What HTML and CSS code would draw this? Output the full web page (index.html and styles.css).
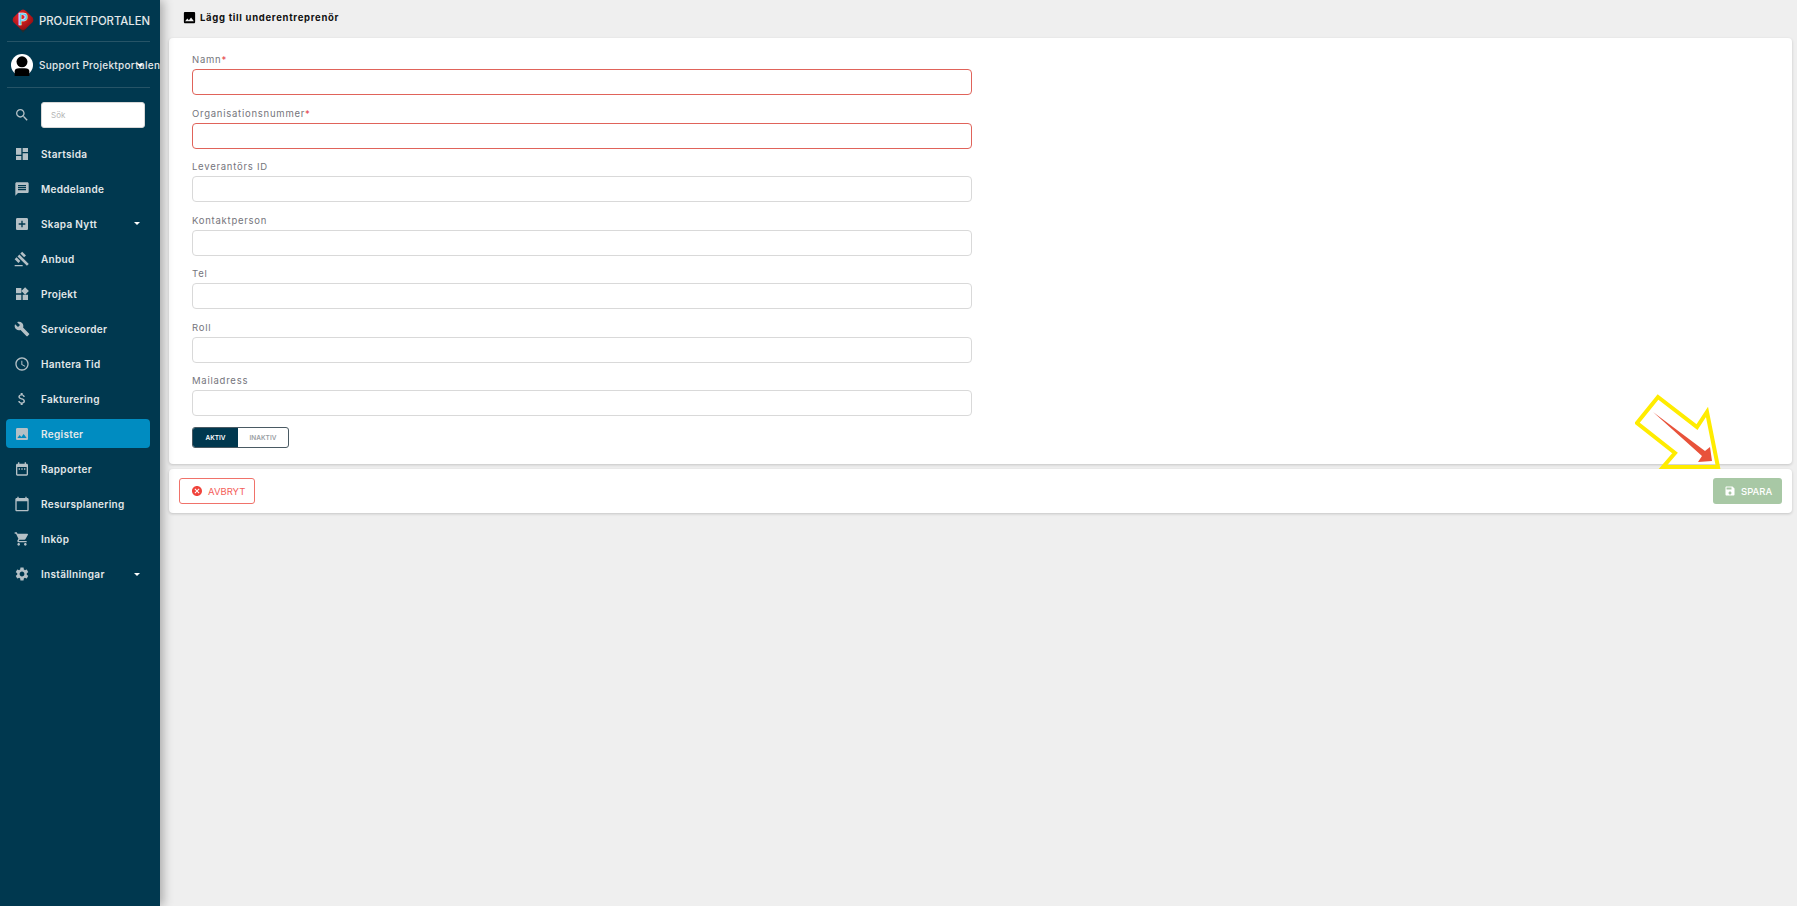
FILE: index.html
```html
<!DOCTYPE html>
<html lang="sv">

<head>
    <meta charset="UTF-8">
    <meta name="viewport" content="width=device-width, initial-scale=1.0">
    <title>Lägg till underentreprenör - Projektportalen</title>
    <link rel="stylesheet" href="styles.css">
</head>

<body>
    <svg class="sprite" aria-hidden="true">
        <symbol id="i-search" viewBox="0 0 24 24"><path d="M15.5 14h-.79l-.28-.27C15.41 12.59 16 11.11 16 9.5 16 5.91 13.09 3 9.5 3S3 5.91 3 9.5 5.91 16 9.5 16c1.61 0 3.09-.59 4.23-1.57l.27.28v.79l5 4.99L20.49 19l-4.99-5zm-6 0C7.01 14 5 11.99 5 9.5S7.01 5 9.5 5 14 7.01 14 9.5 11.99 14 9.5 14z"/></symbol>
        <symbol id="i-dashboard" viewBox="0 0 24 24"><path d="M3 13h8V3H3v10zm0 8h8v-6H3v6zm10 0h8V11h-8v10zm0-18v6h8V3h-8z"/></symbol>
        <symbol id="i-message" viewBox="0 0 24 24"><path d="M20 2H4c-1.1 0-1.99.9-1.99 2L2 22l4-4h14c1.1 0 2-.9 2-2V4c0-1.1-.9-2-2-2zm-2 12H6v-2h12v2zm0-3H6V9h12v2zm0-3H6V6h12v2z"/></symbol>
        <symbol id="i-add" viewBox="0 0 24 24"><path d="M19 3H5c-1.11 0-2 .9-2 2v14c0 1.1.89 2 2 2h14c1.1 0 2-.9 2-2V5c0-1.1-.9-2-2-2zm-2 10h-4v4h-2v-4H7v-2h4V7h2v4h4v2z"/></symbol>
        <symbol id="i-gavel" viewBox="0 0 24 24"><path d="M1 21h12v2H1zM5.245 8.07l2.83-2.827 14.14 14.142-2.828 2.828zM12.317 1l5.657 5.656-2.83 2.83-5.654-5.66zM3.825 9.485l5.657 5.657-2.828 2.828-5.657-5.657z"/></symbol>
        <symbol id="i-widgets" viewBox="0 0 24 24"><path d="M13 13v8h8v-8h-8zM3 21h8v-8H3v8zM3 3v8h8V3H3zm13.66-1.31L11 7.34 16.66 13l5.66-5.66-5.66-5.65z"/></symbol>
        <symbol id="i-build" viewBox="0 0 24 24"><path d="M22.7 19l-9.1-9.1c.9-2.3.4-5-1.5-6.9-2-2-5-2.4-7.4-1.3L9 6 6 9 1.6 4.7C.4 7.1.9 10.1 2.9 12.1c1.9 1.9 4.6 2.4 6.9 1.5l9.1 9.1c.4.4 1 .4 1.4 0l2.3-2.3c.5-.4.5-1.1.1-1.4z"/></symbol>
        <symbol id="i-clock" viewBox="0 0 24 24"><path d="M11.99 2C6.47 2 2 6.48 2 12s4.47 10 9.99 10C17.52 22 22 17.52 22 12S17.52 2 11.99 2zM12 20c-4.42 0-8-3.58-8-8s3.58-8 8-8 8 3.58 8 8-3.58 8-8 8zm.5-13H11v6l5.25 3.15.75-1.23-4.5-2.67z"/></symbol>
        <symbol id="i-money" viewBox="0 0 24 24"><path d="M11.8 10.9c-2.27-.59-3-1.2-3-2.15 0-1.09 1.01-1.85 2.7-1.85 1.78 0 2.44.85 2.5 2.1h2.21c-.07-1.72-1.12-3.3-3.21-3.81V3h-3v2.16c-1.94.42-3.5 1.68-3.5 3.61 0 2.31 1.91 3.46 4.7 4.13 2.5.6 3 1.48 3 2.41 0 .69-.49 1.79-2.7 1.79-2.06 0-2.87-.92-2.98-2.1h-2.2c.12 2.19 1.76 3.42 3.68 3.83V21h3v-2.15c1.95-.37 3.5-1.5 3.5-3.55 0-2.84-2.43-3.81-4.7-4.4z"/></symbol>
        <symbol id="i-image" viewBox="0 0 24 24"><path d="M21 19V5c0-1.1-.9-2-2-2H5c-1.1 0-2 .9-2 2v14c0 1.1.9 2 2 2h14c1.1 0 2-.9 2-2zM8.5 13.5l2.5 3.01L14.5 12l4.5 6H5l3.5-4.5z"/></symbol>
        <symbol id="i-event" viewBox="0 0 24 24"><path d="M9 11H7v2h2v-2zm4 0h-2v2h2v-2zm4 0h-2v2h2v-2zm2-7h-1V2h-2v2H8V2H6v2H5c-1.11 0-1.99.9-1.99 2L3 20c0 1.1.89 2 2 2h14c1.1 0 2-.9 2-2V6c0-1.1-.9-2-2-2zm0 16H5V9h14v11z"/></symbol>
        <symbol id="i-calendar" viewBox="0 0 24 24"><path d="M20 3h-1V1h-2v2H7V1H5v2H4c-1.1 0-2 .9-2 2v16c0 1.1.9 2 2 2h16c1.1 0 2-.9 2-2V5c0-1.1-.9-2-2-2zm0 18H4V8h16v13z"/></symbol>
        <symbol id="i-cart" viewBox="0 0 24 24"><path d="M7 18c-1.1 0-1.99.9-1.99 2S5.9 22 7 22s2-.9 2-2-.9-2-2-2zM1 2v2h2l3.6 7.59-1.35 2.45c-.16.28-.25.61-.25.96 0 1.1.9 2 2 2h12v-2H7.42c-.14 0-.25-.11-.25-.25l.03-.15.9-1.63h7.45c.75 0 1.41-.41 1.75-1.03l3.58-6.49c.08-.14.12-.31.12-.48 0-.55-.45-1-1-1H5.21l-.94-2H1zm16 16c-1.1 0-1.99.9-1.99 2s.89 2 1.99 2 2-.9 2-2-.9-2-2-2z"/></symbol>
        <symbol id="i-settings" viewBox="0 0 24 24"><path d="M19.14 12.94c.04-.3.06-.61.06-.94 0-.32-.02-.64-.07-.94l2.03-1.58c.18-.14.23-.41.12-.61l-1.92-3.32c-.12-.22-.37-.29-.59-.22l-2.39.96c-.5-.38-1.03-.7-1.62-.94l-.36-2.54c-.04-.24-.24-.41-.48-.41h-3.84c-.24 0-.43.17-.47.41l-.36 2.54c-.59.24-1.13.57-1.62.94l-2.39-.96c-.22-.08-.47 0-.59.22L2.74 8.87c-.12.21-.08.47.12.61l2.03 1.58c-.05.3-.09.63-.09.94s.02.64.07.94l-2.03 1.58c-.18.14-.23.41-.12.61l1.92 3.32c.12.22.37.29.59.22l2.39-.96c.5.38 1.03.7 1.62.94l.36 2.54c.05.24.24.41.48.41h3.84c.24 0 .44-.17.47-.41l.36-2.54c.59-.24 1.13-.56 1.62-.94l2.39.96c.22.08.47 0 .59-.22l1.92-3.32c.12-.22.07-.47-.12-.61l-2.01-1.58zM12 15.6c-1.98 0-3.6-1.62-3.6-3.6s1.62-3.6 3.6-3.6 3.6 1.62 3.6 3.6-1.62 3.6-3.6 3.6z"/></symbol>
        <symbol id="i-save" viewBox="0 0 24 24"><path d="M17 3H5c-1.11 0-2 .9-2 2v14c0 1.1.89 2 2 2h14c1.1 0 2-.9 2-2V7l-4-4zm-5 16c-1.66 0-3-1.34-3-3s1.34-3 3-3 3 1.34 3 3-1.34 3-3 3zm3-10H5V5h10v4z"/></symbol>
        <symbol id="i-cancel" viewBox="0 0 24 24"><path d="M12 2C6.47 2 2 6.47 2 12s4.47 10 10 10 10-4.47 10-10S17.53 2 12 2zm5 13.59L15.59 17 12 13.41 8.41 17 7 15.59 10.59 12 7 8.41 8.41 7 12 10.59 15.59 7 17 8.41 13.41 12 17 15.59z"/></symbol>
    </svg>

    <aside class="sidebar">
        <div class="brand">
            <svg class="brand-logo" viewBox="0 0 20 22">
                <defs>
                    <radialGradient id="logo-red" cx="0.4" cy="0.35" r="0.7">
                        <stop offset="0" stop-color="#f0282a"/>
                        <stop offset="1" stop-color="#8e0d12"/>
                    </radialGradient>
                </defs>
                <path d="M10 21.5 L6 17 H14 Z" fill="#2a2a2a"/>
                <path d="M10 0.5 Q11.5 0.5 13 2 L19 8 Q20 10 19 12 L12 18.5 Q10 20 8 18.5 L1 12 Q0 10 1 8 L7 2 Q8.5 0.5 10 0.5 Z" fill="url(#logo-red)"/>
                <text x="10" y="14.5" text-anchor="middle" class="brand-letter">P</text>
            </svg>
            <span class="brand-name">PROJEKTPORTALEN</span>
        </div>
        <div class="user">
            <svg class="avatar" viewBox="0 0 24 24">
                <circle cx="12" cy="12" r="12" fill="#fff"/>
                <circle cx="12" cy="8.5" r="6" fill="#000"/>
                <path d="M4 24 V19 Q4 15.5 9 15.5 H15 Q20 15.5 20 19 V24 Z" fill="#000"/>
            </svg>
            <span class="user-name">Support Projektportalen</span>
            <span class="caret user-caret"></span>
        </div>
        <div class="search">
            <svg class="icon"><use href="#i-search"/></svg>
            <input class="search-input" type="text" placeholder="Sök">
        </div>
        <nav class="menu">
            <a class="menu-item" href="#"><svg class="icon"><use href="#i-dashboard"/></svg>Startsida</a>
            <a class="menu-item" href="#"><svg class="icon"><use href="#i-message"/></svg>Meddelande</a>
            <a class="menu-item" href="#"><svg class="icon"><use href="#i-add"/></svg>Skapa Nytt<span class="caret"></span></a>
            <a class="menu-item" href="#"><svg class="icon"><use href="#i-gavel"/></svg>Anbud</a>
            <a class="menu-item" href="#"><svg class="icon"><use href="#i-widgets"/></svg>Projekt</a>
            <a class="menu-item" href="#"><svg class="icon"><use href="#i-build"/></svg>Serviceorder</a>
            <a class="menu-item" href="#"><svg class="icon"><use href="#i-clock"/></svg>Hantera Tid</a>
            <a class="menu-item" href="#"><svg class="icon"><use href="#i-money"/></svg>Fakturering</a>
            <a class="menu-item active" href="#"><svg class="icon"><use href="#i-image"/></svg>Register</a>
            <a class="menu-item" href="#"><svg class="icon"><use href="#i-event"/></svg>Rapporter</a>
            <a class="menu-item" href="#"><svg class="icon"><use href="#i-calendar"/></svg>Resursplanering</a>
            <a class="menu-item" href="#"><svg class="icon"><use href="#i-cart"/></svg>Inköp</a>
            <a class="menu-item" href="#"><svg class="icon"><use href="#i-settings"/></svg>Inställningar<span class="caret"></span></a>
        </nav>
    </aside>

    <main class="content">
        <h1 class="page-title"><svg class="title-icon"><use href="#i-image"/></svg>Lägg till underentreprenör</h1>

        <form class="card form-card">
            <div class="form-group">
                <label for="name">Namn<span class="req">*</span></label>
                <input class="invalid" type="text" id="name">
            </div>
            <div class="form-group">
                <label for="org">Organisationsnummer<span class="req">*</span></label>
                <input class="invalid" type="text" id="org">
            </div>
            <div class="form-group">
                <label for="supplier">Leverantörs ID</label>
                <input type="text" id="supplier">
            </div>
            <div class="form-group">
                <label for="contact">Kontaktperson</label>
                <input type="text" id="contact">
            </div>
            <div class="form-group">
                <label for="tel">Tel</label>
                <input type="text" id="tel">
            </div>
            <div class="form-group">
                <label for="role">Roll</label>
                <input type="text" id="role">
            </div>
            <div class="form-group">
                <label for="mail">Mailadress</label>
                <input type="text" id="mail">
            </div>
            <div class="toggle">
                <span class="toggle-on">AKTIV</span>
                <span class="toggle-off">INAKTIV</span>
            </div>
        </form>

        <div class="card actions">
            <button class="btn-cancel" type="button"><svg class="btn-icon"><use href="#i-cancel"/></svg>AVBRYT</button>
            <button class="btn-save" type="button"><svg class="btn-icon"><use href="#i-save"/></svg>SPARA</button>
        </div>
    </main>

    <!-- annotation drawn on top of the screenshot -->
    <svg class="annotation" viewBox="0 0 90 80">
        <polygon points="23,4 62,34 72,19 83,74 28,74 40,60 2,30" fill="none" stroke="#ffec00" stroke-width="4"/>
        <polygon points="18,19 70,58 75,54 77,68 63,69 67,63" fill="#e8523a"/>
    </svg>
</body>

</html>
```

FILE: styles.css
```css
* {
    box-sizing: border-box;
}

body {
    margin: 0;
    height: 906px;
    overflow: hidden;
    display: flex;
    font-family: Inter, "Liberation Sans", sans-serif;
    background-color: #efefef;
    position: relative;
}

.sprite {
    display: none;
}

/* sidebar */
.sidebar {
    width: 160px;
    flex-shrink: 0;
    background-color: #00384f;
    color: #e3e8ea;
    padding: 0 10px 0 6px;
    overflow: hidden;
    box-shadow: 3px 0 10px rgba(0, 0, 0, 0.3);
    z-index: 1;
}

.brand {
    height: 42px;
    display: flex;
    align-items: center;
    gap: 5px;
    margin-left: 1px;
    padding-left: 5px;
    border-bottom: 1px solid #265467;
}

.brand-logo {
    width: 22px;
    height: 24px;
    flex-shrink: 0;
}

.brand-letter {
    font-size: 14px;
    font-weight: 700;
    fill: #5cc3ee;
    stroke: #ffffff;
    stroke-width: 0.4px;
}

.brand-name {
    font-size: 11.3px;
    font-weight: 500;
    white-space: nowrap;
}

.user {
    height: 46px;
    display: flex;
    align-items: center;
    gap: 6px;
    margin-left: 1px;
    padding-left: 4px;
    border-bottom: 1px solid #265467;
    position: relative;
}

.avatar {
    width: 22px;
    height: 22px;
    flex-shrink: 0;
}

.user-name {
    font-size: 10px;
    font-weight: 500;
    letter-spacing: 0.3px;
    white-space: nowrap;
}

.caret {
    margin-left: auto;
    margin-right: 10px;
    width: 0;
    height: 0;
    border-left: 3px solid transparent;
    border-right: 3px solid transparent;
    border-top: 3px solid #ffffff;
}

.user-caret {
    position: absolute;
    left: 130px;
    top: 22px;
}

.search {
    display: flex;
    align-items: center;
    gap: 11px;
    padding: 2px 0 0 8px;
    height: 51px;
}

.search-input {
    width: 104px;
    height: 26px;
    border: 1px solid #d8d8d8;
    border-radius: 3px;
    padding: 0 9px;
    font-family: inherit;
    font-size: 8px;
    background-color: #ffffff;
}

.search-input::placeholder {
    color: #b5b5b5;
}

.menu {
    display: flex;
    flex-direction: column;
    gap: 6.05px;
}

.menu-item {
    height: 29px;
    display: flex;
    align-items: center;
    gap: 11px;
    padding-left: 8px;
    border-radius: 4px;
    color: #e3e8ea;
    font-size: 10px;
    font-weight: 600;
    letter-spacing: 0.3px;
    text-decoration: none;
}

.menu-item.active {
    background-color: #008cc1;
}

.icon {
    width: 16px;
    height: 16px;
    flex-shrink: 0;
    fill: currentColor;
    color: #b4c0c6;
}

/* main area */
.content {
    flex-grow: 1;
    padding: 0 5px 0 9px;
}

.page-title {
    height: 38px;
    margin: 0;
    padding: 0 0 4px 13px;
    display: flex;
    align-items: center;
    gap: 3px;
    font-size: 9.5px;
    font-weight: 700;
    letter-spacing: 0.7px;
    color: #111111;
}

.title-icon {
    width: 15px;
    height: 15px;
    fill: #000000;
}

.card {
    background-color: #ffffff;
    border-radius: 4px;
    box-shadow: 0 1px 3px rgba(0, 0, 0, 0.18);
}

.form-card {
    height: 426px;
    padding: 16px 23px;
}

.form-group {
    width: 780px;
    height: 53.5px;
}

label {
    display: block;
    height: 15px;
    font-size: 9.5px;
    letter-spacing: 0.75px;
    color: #75757c;
}

.req {
    color: #e5484d;
}

.form-group input {
    display: block;
    width: 100%;
    height: 26px;
    border: 1px solid #d9d9d9;
    border-radius: 4px;
    background-color: #ffffff;
}

.form-group input.invalid {
    border-color: #e0635a;
}

.toggle {
    display: flex;
    width: 97px;
    height: 21px;
    margin-top: -1.5px;
    border: 1px solid #4a5a63;
    border-radius: 3px;
    overflow: hidden;
    font-size: 6.5px;
    font-weight: 600;
}

.toggle-on,
.toggle-off {
    display: flex;
    align-items: center;
    justify-content: center;
}

.toggle-on {
    width: 45px;
    background-color: #00384f;
    color: #ffffff;
}

.toggle-off {
    flex-grow: 1;
    color: #9a9ea3;
}

.actions {
    height: 44px;
    margin-top: 5px;
    padding: 0 10px;
    display: flex;
    align-items: center;
    justify-content: space-between;
}

.btn-cancel,
.btn-save {
    height: 26px;
    display: flex;
    align-items: center;
    gap: 5px;
    border-radius: 3px;
    font-family: inherit;
    font-size: 9.5px;
}

.btn-cancel {
    width: 76px;
    padding: 0 0 0 11px;
    background-color: #ffffff;
    border: 1px solid #f0726a;
    color: #f4605a;
}

.btn-save {
    width: 69px;
    padding: 0 0 0 11px;
    background-color: #a8c8a5;
    border: none;
    color: #ffffff;
    font-weight: 500;
}

.btn-icon {
    width: 12px;
    height: 12px;
    fill: currentColor;
}

.btn-cancel .btn-icon {
    fill: #f0443c;
}

.annotation {
    position: absolute;
    left: 1635px;
    top: 393px;
    width: 90px;
    height: 80px;
    z-index: 2;
}
```
